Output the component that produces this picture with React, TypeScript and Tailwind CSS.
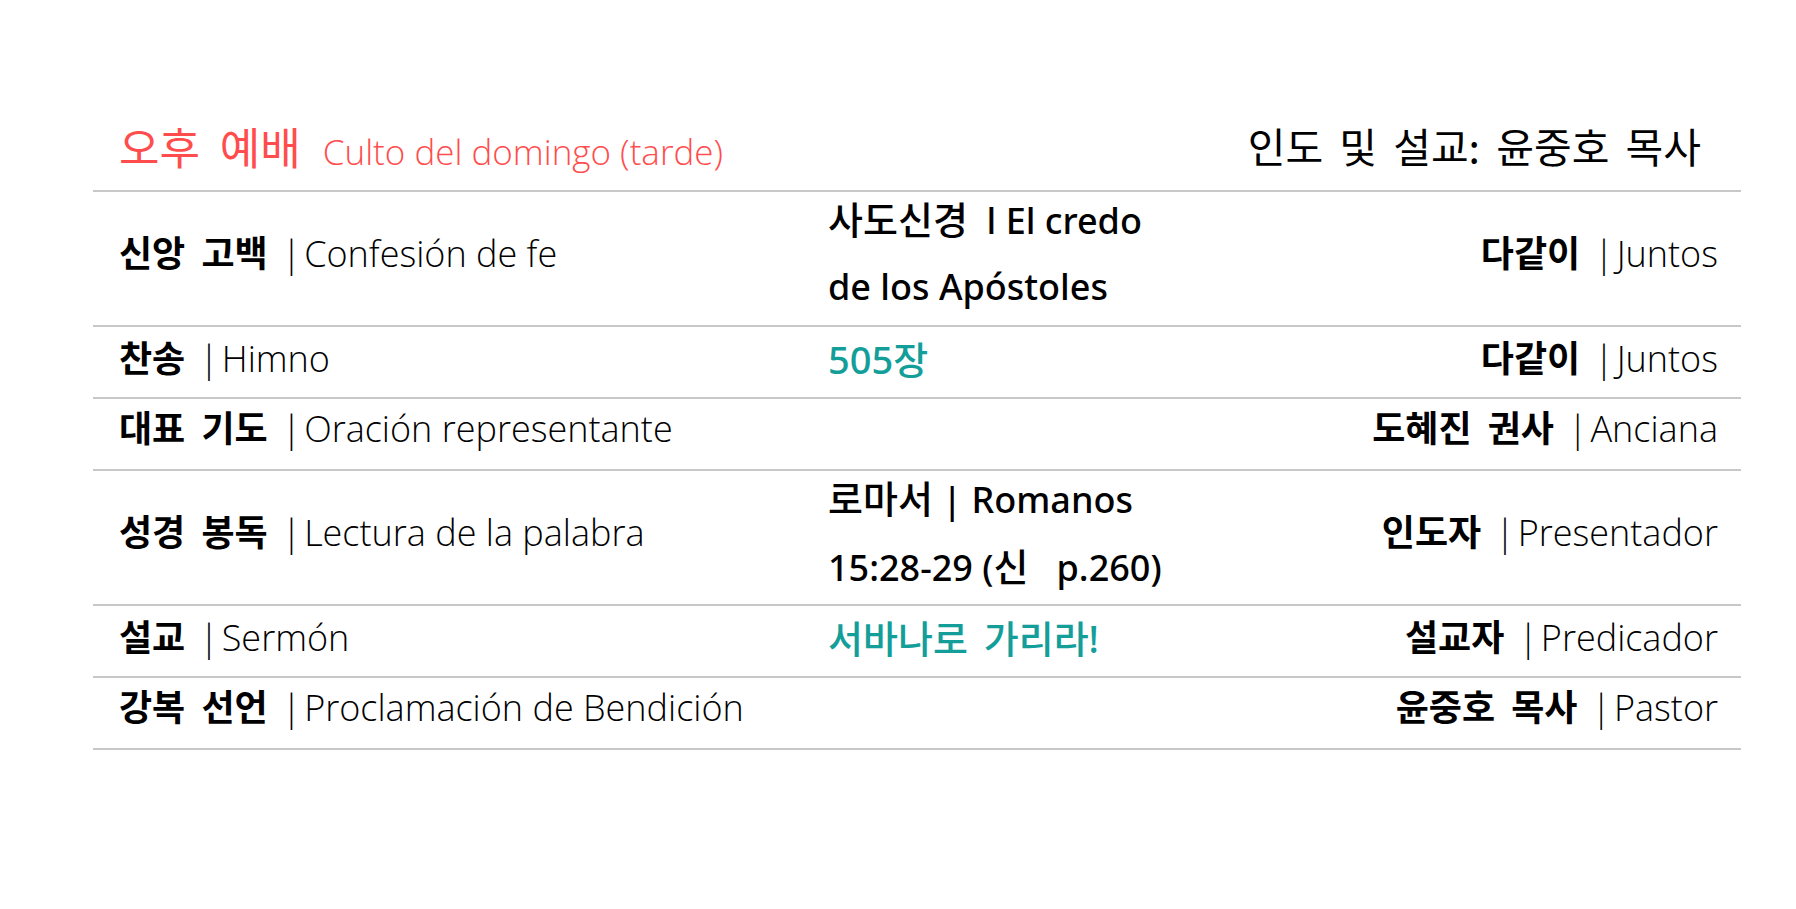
import React from "react";

type Row = {
  ko: string;
  es: string;
  mid?: React.ReactNode;
  teal?: boolean;
  double?: boolean;
  rko: string;
  res: string;
};

const K = ({ children }: { children: React.ReactNode }) => (
  <span className="text-[38px] [word-spacing:6px]">{children}</span>
);

const rows: Row[] = [
  {
    ko: "신앙 고백",
    es: "Confesión de fe",
    double: true,
    mid: (
      <>
        <K>사도신경</K>
        <span className="whitespace-pre">  l El credo</span>
        <br />
        de los Apóstoles
      </>
    ),
    rko: "다같이",
    res: "Juntos",
  },
  { ko: "찬송", es: "Himno", mid: <K>505장</K>, teal: true, rko: "다같이", res: "Juntos" },
  { ko: "대표 기도", es: "Oración representante", rko: "도혜진 권사", res: "Anciana" },
  {
    ko: "성경 봉독",
    es: "Lectura de la palabra",
    double: true,
    mid: (
      <>
        <K>로마서</K> | Romanos
        <br />
        <span className="whitespace-pre">
          15:28-29 (<K>신</K>   p.260)
        </span>
      </>
    ),
    rko: "인도자",
    res: "Presentador",
  },
  { ko: "설교", es: "Sermón", mid: <K>서바나로 가리라!</K>, teal: true, rko: "설교자", res: "Predicador" },
  { ko: "강복 선언", es: "Proclamación de Bendición", rko: "윤중호 목사", res: "Pastor" },
];

const ko = "font-['Noto_Sans_CJK_KR',sans-serif]";
const latin = "font-['Open_Sans','Noto_Sans_CJK_KR',sans-serif]";

function Label({ k, e }: { k: string; e: string }) {
  return (
    <span className="whitespace-nowrap leading-none text-black">
      <span className={`${ko} font-bold text-[36px] [word-spacing:8px]`}>{k}</span>
      <span className={`${latin} font-light text-[36px] ml-[14px] mr-[3px]`}>|</span>
      <span className={`${latin} font-light text-[36px]`}>{e}</span>
    </span>
  );
}

export default function App() {
  return (
    <main className="min-h-screen bg-white pt-[102px] pl-[93px]">
      <div className="w-[1648px]">
        <div className="flex h-[90px] items-center justify-between border-b-2 border-[#c8c8c8] pl-[26px] pr-[40px]">
          <div className="flex items-baseline gap-[22px] text-[#ff4d4d]">
            <span className={`${ko} text-[44px] [word-spacing:10px]`}>오후 예배</span>
            <span className={`${latin} font-light text-[35px]`}>Culto del domingo (tarde)</span>
          </div>
          <span className={`${ko} text-[41px] text-black [word-spacing:7px]`}>인도 및 설교: 윤중호 목사</span>
        </div>

        {rows.map((r, i) => (
          <div
            key={i}
            className={`grid grid-cols-[711px_395px_1fr] border-b-2 border-[#c8c8c8] ${
              r.double ? "h-[135px]" : "h-[72px]"
            }`}
          >
            <div className={`flex items-center pl-[26px] ${r.double ? "pb-[12px]" : "pb-[14px]"}`}>
              <Label k={r.ko} e={r.es} />
            </div>
            <div
              className={`whitespace-nowrap pl-[24px] font-['Noto_Sans','Noto_Sans_CJK_KR',sans-serif] font-medium text-[36px] ${
                r.double ? "self-start -mt-[6px] leading-[66px]" : "self-center pb-[8px] leading-[64px]"
              } ${r.teal ? "text-[#149e9a]" : "text-black"}`}
            >
              {r.mid}
            </div>
            <div className={`flex items-center justify-end pr-[23px] ${r.double ? "pb-[12px]" : "pb-[14px]"}`}>
              <Label k={r.rko} e={r.res} />
            </div>
          </div>
        ))}
      </div>
    </main>
  );
}
